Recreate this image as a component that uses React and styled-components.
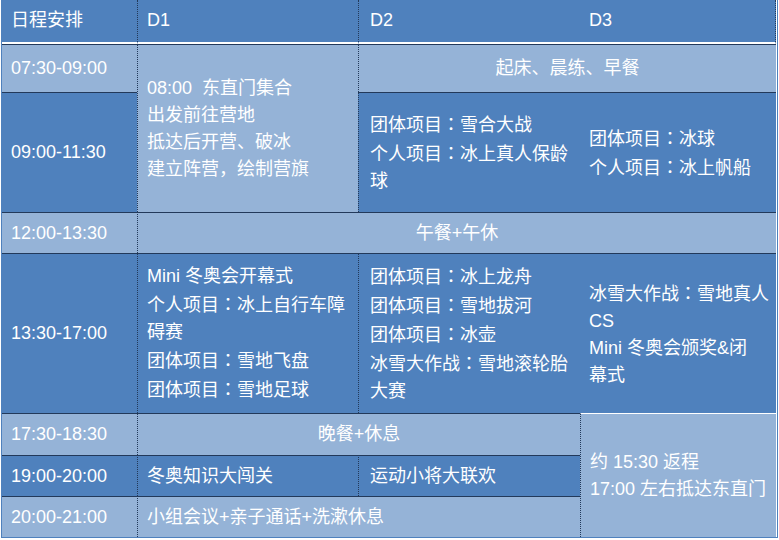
import React from 'react';
import styled, { createGlobalStyle } from 'styled-components';

const GlobalStyle = createGlobalStyle`
  body {
    margin: 0;
    background: #ffffff;
  }
`;

const DARK = '#4f81bd';
const LIGHT = '#95b3d7';
const LINE = '#22395a';

const Page = styled.div`
  padding-left: 2px;
  font-family: "Liberation Sans", "Noto Sans CJK SC", sans-serif;
  font-size: 18px;
  line-height: 27px;
  color: #ffffff;
`;

const Table = styled.div`
  width: 775px;
  display: grid;
  grid-template-columns: 135px 221px 222px 196px;
  grid-template-rows: 44px 48px 120px 41px 160px 42px 41px 41px;
  border-left: 1px solid ${DARK};
  border-right: 1px solid ${DARK};
  border-bottom: 1px solid ${DARK};
  box-sizing: content-box;
  margin-left: -1px;
`;

const Cell = styled.div`
  box-sizing: border-box;
  grid-column: ${(p) => p.$col};
  grid-row: ${(p) => p.$row};
  background: ${(p) => (p.$tone === 'dark' ? DARK : LIGHT)};
  display: flex;
  flex-direction: column;
  justify-content: center;
  align-items: ${(p) => (p.$center ? 'center' : 'flex-start')};
  padding-left: ${(p) => (p.$center ? 0 : p.$pad ?? 9)}px;
  border-top: 1px solid ${(p) => (p.$whiteTop ? '#ffffff' : LINE)};
  border-left: ${(p) => (p.$divide ? `1px dotted ${LINE}` : 'none')};
  white-space: nowrap;
`;

const HeadCell = styled(Cell)`
  background: ${DARK};
  border-top: none;
  border-bottom: 2px solid #ffffff;
  border-right: ${(p) => (p.$edge ? `1px dotted ${LINE}` : 'none')};
  padding-bottom: 1px;
`;

const Line = styled.div`
  display: block;
`;

const Colon = styled.span`
  font-family: "Noto Sans CJK TC", sans-serif;
`;

const Item = ({ kind, name }) => (
  <Line>
    {kind}
    <Colon>：</Colon>
    {name}
  </Line>
);

function App() {
  return (
    <>
      <GlobalStyle />
      <Page>
        <Table>
          <HeadCell $col="1" $row="1">日程安排</HeadCell>
          <HeadCell $col="2" $row="1" $divide>D1</HeadCell>
          <HeadCell $col="3" $row="1" $divide $pad={11}>D2</HeadCell>
          <HeadCell $col="4" $row="1" $edge>D3</HeadCell>

          <Cell $col="1" $row="2">07:30-09:00</Cell>
          <Cell $col="2" $row="2 / 4" $divide>
            <Line>08:00&nbsp;&nbsp;东直门集合</Line>
            <Line>出发前往营地</Line>
            <Line>抵达后开营、破冰</Line>
            <Line>建立阵营，绘制营旗</Line>
          </Cell>
          <Cell $col="3 / 5" $row="2" $divide $center>起床、晨练、早餐</Cell>

          <Cell $col="1" $row="3" $tone="dark">09:00-11:30</Cell>
          <Cell $col="3" $row="3" $tone="dark" $divide $pad={11}>
            <Item kind="团体项目" name="雪合大战" />
            <Item kind="个人项目" name="冰上真人保龄" />
            <Line>球</Line>
          </Cell>
          <Cell $col="4" $row="3" $tone="dark">
            <Item kind="团体项目" name="冰球" />
            <Item kind="个人项目" name="冰上帆船" />
          </Cell>

          <Cell $col="1" $row="4">12:00-13:30</Cell>
          <Cell $col="2 / 5" $row="4" $divide $center>午餐+午休</Cell>

          <Cell $col="1" $row="5" $tone="dark">13:30-17:00</Cell>
          <Cell $col="2" $row="5" $tone="dark" $divide>
            <Line>Mini 冬奥会开幕式</Line>
            <Item kind="个人项目" name="冰上自行车障" />
            <Line>碍赛</Line>
            <Item kind="团体项目" name="雪地飞盘" />
            <Item kind="团体项目" name="雪地足球" />
          </Cell>
          <Cell $col="3" $row="5" $tone="dark" $divide $pad={11}>
            <Item kind="团体项目" name="冰上龙舟" />
            <Item kind="团体项目" name="雪地拔河" />
            <Item kind="团体项目" name="冰壶" />
            <Item kind="冰雪大作战" name="雪地滚轮胎" />
            <Line>大赛</Line>
          </Cell>
          <Cell $col="4" $row="5" $tone="dark">
            <Item kind="冰雪大作战" name="雪地真人" />
            <Line>CS</Line>
            <Line>Mini 冬奥会颁奖&amp;闭</Line>
            <Line>幕式</Line>
          </Cell>

          <Cell $col="1" $row="6">17:30-18:30</Cell>
          <Cell $col="2 / 4" $row="6" $divide $center>晚餐+休息</Cell>
          <Cell $col="4" $row="6 / 9" $divide $whiteTop>
            <Line>约 15:30 返程</Line>
            <Line>17:00 左右抵达东直门</Line>
          </Cell>

          <Cell $col="1" $row="7" $tone="dark">19:00-20:00</Cell>
          <Cell $col="2" $row="7" $tone="dark" $divide>冬奥知识大闯关</Cell>
          <Cell $col="3" $row="7" $tone="dark" $divide $pad={11}>运动小将大联欢</Cell>

          <Cell $col="1" $row="8">20:00-21:00</Cell>
          <Cell $col="2 / 4" $row="8" $divide>小组会议+亲子通话+洗漱休息</Cell>
        </Table>
      </Page>
    </>
  );
}

export default App;
